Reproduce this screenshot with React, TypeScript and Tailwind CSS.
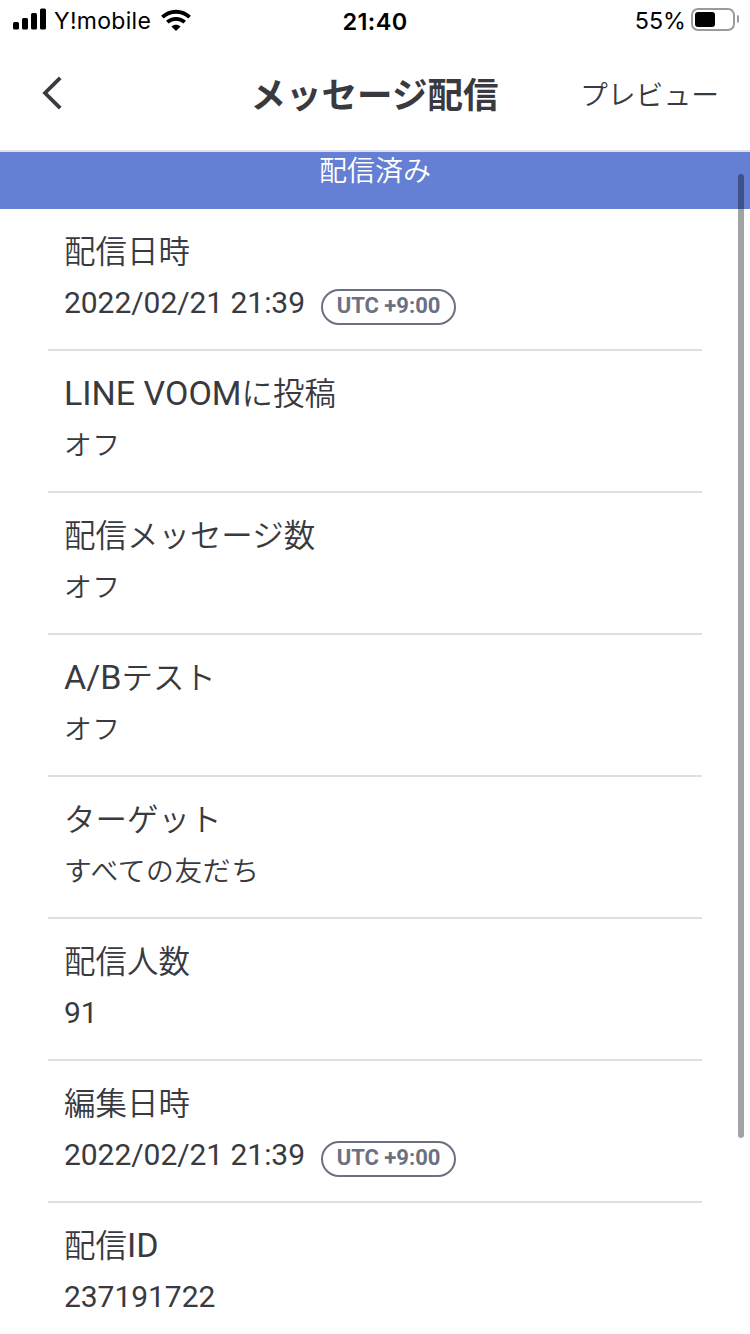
import React from 'react';

interface DetailRow {
    label: string;
    value: string;
    timezone?: string;
}

const rows: DetailRow[] = [
    { label: '配信日時', value: '2022/02/21 21:39', timezone: 'UTC +9:00' },
    { label: 'LINE VOOMに投稿', value: 'オフ' },
    { label: '配信メッセージ数', value: 'オフ' },
    { label: 'A/Bテスト', value: 'オフ' },
    { label: 'ターゲット', value: 'すべての友だち' },
    { label: '配信人数', value: '91' },
    { label: '編集日時', value: '2022/02/21 21:39', timezone: 'UTC +9:00' },
    { label: '配信ID', value: '237191722' },
];

// Japanese runs are set slightly smaller than the Latin text next to them
const MixedText: React.FC<{ text: string; loose?: boolean }> = ({ text, loose }) => (
    <>
        {text.split(/([^\x00-\x7F]+)/).filter(Boolean).map((part, i) =>
            /[^\x00-\x7F]/.test(part) ? (
                <span
                    key={i}
                    className={`font-['Noto_Sans_CJK_JP',sans-serif] text-[0.926em] leading-none font-[350] ${loose ? 'tracking-[0.6px]' : ''}`}
                >
                    {part}
                </span>
            ) : (
                <span key={i}>{part}</span>
            )
        )}
    </>
);

const StatusBar: React.FC = () => (
    <div className="grid h-10 shrink-0 grid-cols-3 items-center font-['Inter',sans-serif] text-black">
        <div className="flex items-center pl-[13px]">
            <svg className="mb-[2px]" width="33" height="22" viewBox="0 0 33 22" fill="currentColor">
                <rect x="0" y="14" width="6" height="7.5" rx="1.5" />
                <rect x="9" y="10" width="6" height="11.5" rx="1.5" />
                <rect x="18" y="5" width="6" height="16.5" rx="1.5" />
                <rect x="27" y="0.5" width="6" height="21" rx="1.5" />
            </svg>
            <span className="ml-[8px] pt-[3px] text-[23px] tracking-[0.3px]">Y!mobile</span>
            <svg className="mb-px ml-[10px]" width="30" height="22" viewBox="0 0 30 22" fill="none" stroke="currentColor" strokeWidth="3.8">
                <path d="M1.4 8.2 C9 0.9 21 0.9 28.6 8.2" />
                <path d="M6.3 13.2 C11.2 8.7 18.8 8.7 23.7 13.2" />
                <path d="M15 22 L10.4 17.4 C13 15.2 17 15.2 19.6 17.4 Z" fill="currentColor" stroke="none" />
            </svg>
        </div>
        <span className="pt-[3px] text-center text-[23.5px] font-semibold tracking-[0.4px]">21:40</span>
        <div className="flex items-center justify-end pr-[11px]">
            <span className="mr-[5px] pt-[3px] text-[23.3px]">55%</span>
            <div className="mb-[2px] flex h-[23px] w-11 items-center rounded-[7px] border-2 border-[#9b9b9b] pl-[2px]">
                <div className="h-[15px] w-5 rounded-[3px] bg-black" />
            </div>
            <div className="mb-[2px] ml-[2px] h-[8px] w-[2px] rounded-r-full bg-[#9b9b9b]" />
        </div>
    </div>
);

const Header: React.FC = () => (
    <header className="grid h-[112px] shrink-0 grid-cols-[1fr_auto_1fr] items-center border-b-2 border-[#dedfeb] font-['Noto_Sans_CJK_JP',sans-serif]">
        <button className="mb-[5px] ml-[42px] w-5">
            <svg width="20" height="34" viewBox="0 0 20 34" fill="none" stroke="currentColor" strokeWidth="3.8">
                <path d="M18.2 1.8 L3 17 L18.2 32.2" />
            </svg>
        </button>
        <h1 className="mr-px mb-[5px] text-[35.5px] leading-[40px] font-bold">メッセージ配信</h1>
        <button className="mr-[31px] mb-[4px] justify-self-end text-[27.8px] leading-[40px] font-[350]">プレビュー</button>
    </header>
);

const Row: React.FC<DetailRow> = ({ label, value, timezone }) => (
    <li className="h-[142px] shrink-0 border-b-2 border-[#dfdfdf] px-4 pt-4">
        <div className="h-[52px] text-[34px] leading-[52px]">
            <MixedText text={label} />
        </div>
        <div className="flex h-[52px] items-start text-[30px] leading-[52px]">
            <span className="tracking-[-0.05px]">
                <MixedText text={value} loose />
            </span>
            {timezone && (
                <span className="mt-3 ml-4 flex h-9 w-[135px] items-center justify-center rounded-full border-2 border-[#6b7083] pb-[3px] text-[22px] leading-none font-bold text-[#6b7083]">
                    {timezone}
                </span>
            )}
        </div>
    </li>
);

export default function App() {
    return (
        <div className="relative flex h-[1334px] w-[750px] flex-col overflow-hidden bg-white font-['Roboto','Noto_Sans_CJK_JP',sans-serif] text-[#383a40]">
            <StatusBar />
            <Header />
            <div className="h-[57px] shrink-0 bg-[#647fd4] text-center font-['Noto_Sans_CJK_JP',sans-serif] text-[28px] leading-[35px] font-[350] text-white">
                配信済み
            </div>
            <ul className="mx-12 flex flex-col">
                {rows.map((row) => (
                    <Row key={row.label} {...row} />
                ))}
            </ul>
            <div className="absolute top-[174px] right-[6px] h-[964px] w-[6px] rounded-full bg-black/36" />
        </div>
    );
}
